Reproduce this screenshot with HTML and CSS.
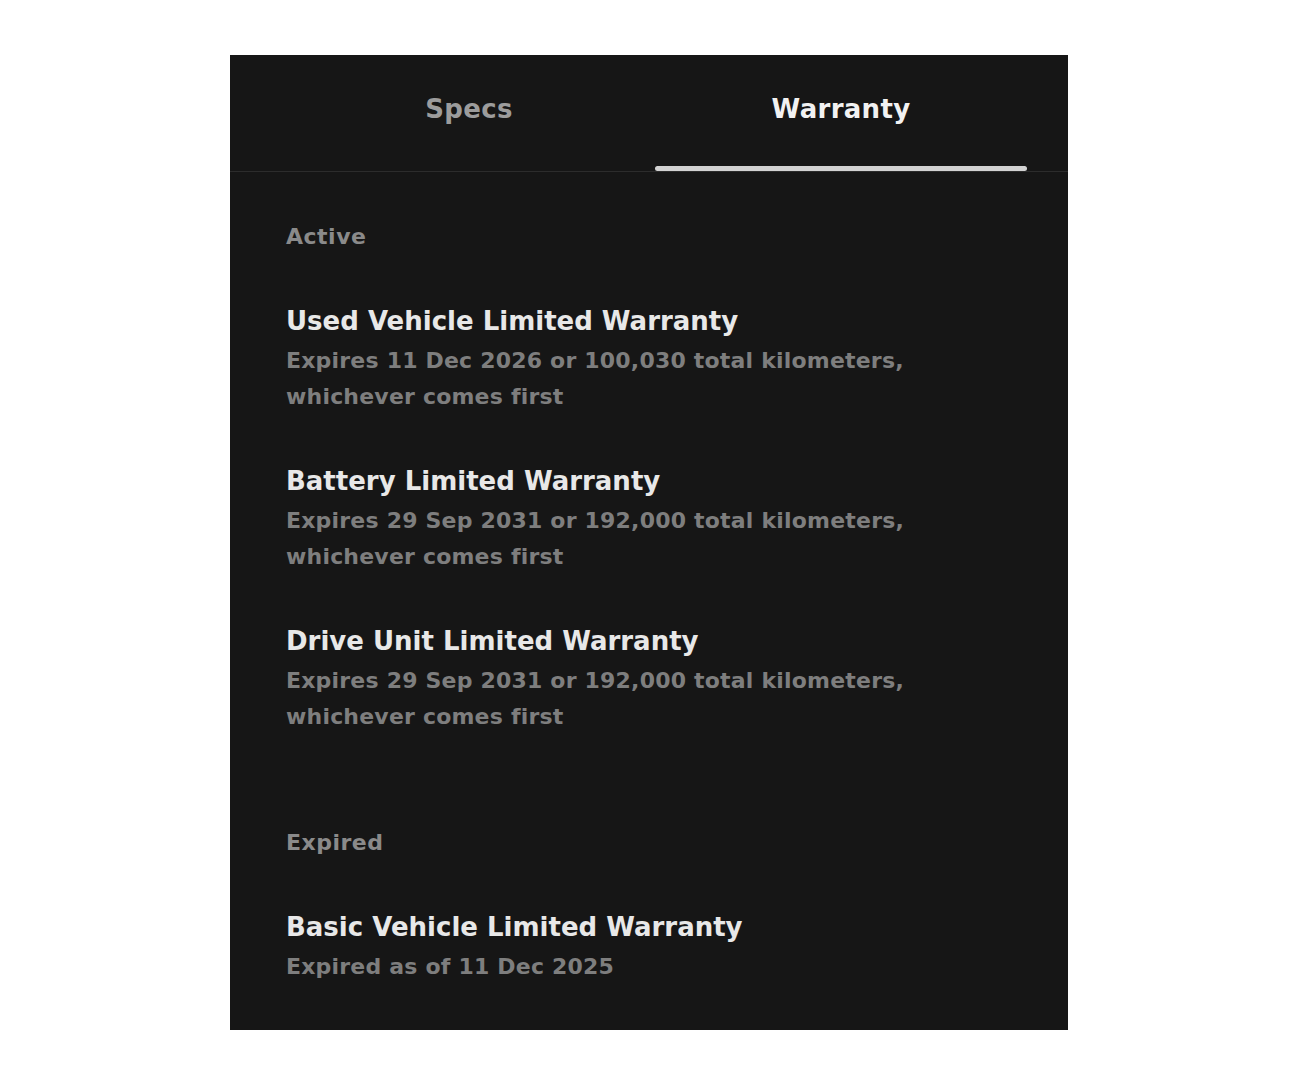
FILE: index.html
```html
<!DOCTYPE html>
<html>
<head>
  <meta charset="UTF-8" />
  <title>Warranty</title>
  <link rel="stylesheet" href="styles.css">
</head>
<body>

  <div class="panel">
    <div class="tabbar">
      <div class="tabs">
        <div class="tab">Specs</div>
        <div class="tab actiu">Warranty</div>
      </div>
    </div>

    <div class="contingut">
      <div class="etiqueta">Active</div>

      <div class="item">
        <div class="titol">Used Vehicle Limited Warranty</div>
        <div class="text">Expires 11 Dec 2026 or 100,030 total kilometers,<br>whichever comes first</div>
      </div>

      <div class="item">
        <div class="titol">Battery Limited Warranty</div>
        <div class="text">Expires 29 Sep 2031 or 192,000 total kilometers,<br>whichever comes first</div>
      </div>

      <div class="item">
        <div class="titol">Drive Unit Limited Warranty</div>
        <div class="text">Expires 29 Sep 2031 or 192,000 total kilometers,<br>whichever comes first</div>
      </div>

      <div class="etiqueta expirat">Expired</div>

      <div class="item">
        <div class="titol">Basic Vehicle Limited Warranty</div>
        <div class="text">Expired as of 11 Dec 2025</div>
      </div>
    </div>
  </div>

</body>
</html>
```

FILE: styles.css
```css
body {
  margin: 0;
  background-color: #ffffff;
  font-family: "DejaVu Sans", "Open Sans", sans-serif;
}
.panel {
  margin: 55px 0 0 230px;
  width: 838px;
  height: 975px;
  background-color: #161616;
}
.tabbar {
  border-bottom: 1px solid #2c2c2c;
}
.tabs {
  display: flex;
  margin: 0 41px 0 53px;
}
.tab {
  flex: 1;
  position: relative;
  height: 116px;
  box-sizing: border-box;
  padding-top: 39px;
  text-align: center;
  font-size: 26px;
  line-height: 30px;
  font-weight: bold;
  letter-spacing: 0.3px;
  color: #9c9c9c;
}
.tab.actiu {
  color: #f2f2f2;
}
.tab.actiu::after {
  content: "";
  position: absolute;
  left: 0;
  right: 0;
  bottom: 0;
  height: 5px;
  border-radius: 3px;
  background-color: #d2d2d2;
}
.contingut {
  padding: 50px 0 0 56px;
}
.etiqueta {
  font-size: 22px;
  line-height: 30px;
  font-weight: bold;
  letter-spacing: 0.5px;
  color: #8a8a8a;
}
.etiqueta.expirat {
  margin-top: 93px;
}
.item {
  margin-top: 44px;
}
.etiqueta + .item {
  margin-top: 47px;
}
.titol {
  font-size: 26px;
  line-height: 44px;
  font-weight: bold;
  color: #e8e8e8;
}
.text {
  font-size: 22px;
  line-height: 36px;
  font-weight: bold;
  letter-spacing: 0.2px;
  color: #7e7e7e;
}
```
